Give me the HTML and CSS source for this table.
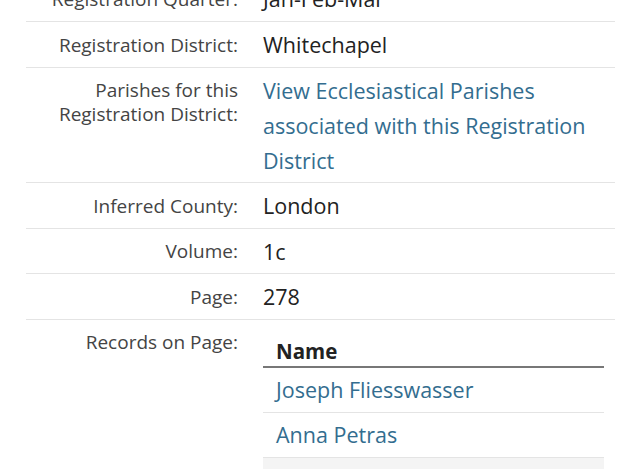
FILE: index.html
```html
<!DOCTYPE html>
<html lang="en">
<head>
    <meta charset="UTF-8">
    <meta name="viewport" content="width=device-width, initial-scale=1.0">
    <title>Birth Registration</title>
    <link rel="stylesheet" href="styles.css">
</head>
<body>
    <div class="details">
        <div class="row">
            <div class="label">Registration Quarter:</div>
            <div class="value">Jan-Feb-Mar</div>
        </div>
        <div class="row">
            <div class="label">Registration District:</div>
            <div class="value">Whitechapel</div>
        </div>
        <div class="row">
            <div class="label">Parishes for this Registration District:</div>
            <div class="value"><a href="#">View Ecclesiastical Parishes associated with this Registration District</a></div>
        </div>
        <div class="row">
            <div class="label">Inferred County:</div>
            <div class="value">London</div>
        </div>
        <div class="row">
            <div class="label">Volume:</div>
            <div class="value">1c</div>
        </div>
        <div class="row">
            <div class="label">Page:</div>
            <div class="value">278</div>
        </div>
        <div class="row records">
            <div class="label">Records on Page:</div>
            <div class="value">
                <table class="names">
                    <thead>
                        <tr><th>Name</th></tr>
                    </thead>
                    <tbody>
                        <tr><td><a href="#">Joseph Fliesswasser</a></td></tr>
                        <tr><td><a href="#">Anna Petras</a></td></tr>
                        <tr><td><a href="#">Rachel Levy</a></td></tr>
                    </tbody>
                </table>
            </div>
        </div>
    </div>
</body>
</html>
```

FILE: styles.css
```css
body {
    margin: 0;
    padding: 0 25px 0 26px;
    font-family: "Open Sans", Lato, sans-serif;
    background: #fff;
    color: #222;
}

.details {
    margin-top: -23.6px;
}

.row {
    display: grid;
    grid-template-columns: 212px 1fr;
    column-gap: 25px;
    padding: 5px 0 4.6px;
    border-bottom: 1px solid #e4e4e4;
}

.label {
    text-align: right;
    font-size: 19px;
    line-height: 24px;
    color: #444;
    padding-top: 5.5px;
}

.value {
    font-size: 21.5px;
    line-height: 35px;
}

a {
    color: #336d8f;
    text-decoration: none;
}

.records {
    border-bottom: none;
}

.names {
    width: 341px;
    border-collapse: collapse;
}

.names th {
    text-align: left;
    font-size: 20.5px;
    font-weight: bold;
    padding: 11px 13px 0;
    line-height: 30px;
    border-bottom: 2px solid #777;
}

.names td {
    padding: 5px 13px;
    line-height: 34px;
    border-bottom: 1px solid #e4e4e4;
}

.names tbody tr:nth-child(3) td {
    background: #f4f4f4;
}
```
